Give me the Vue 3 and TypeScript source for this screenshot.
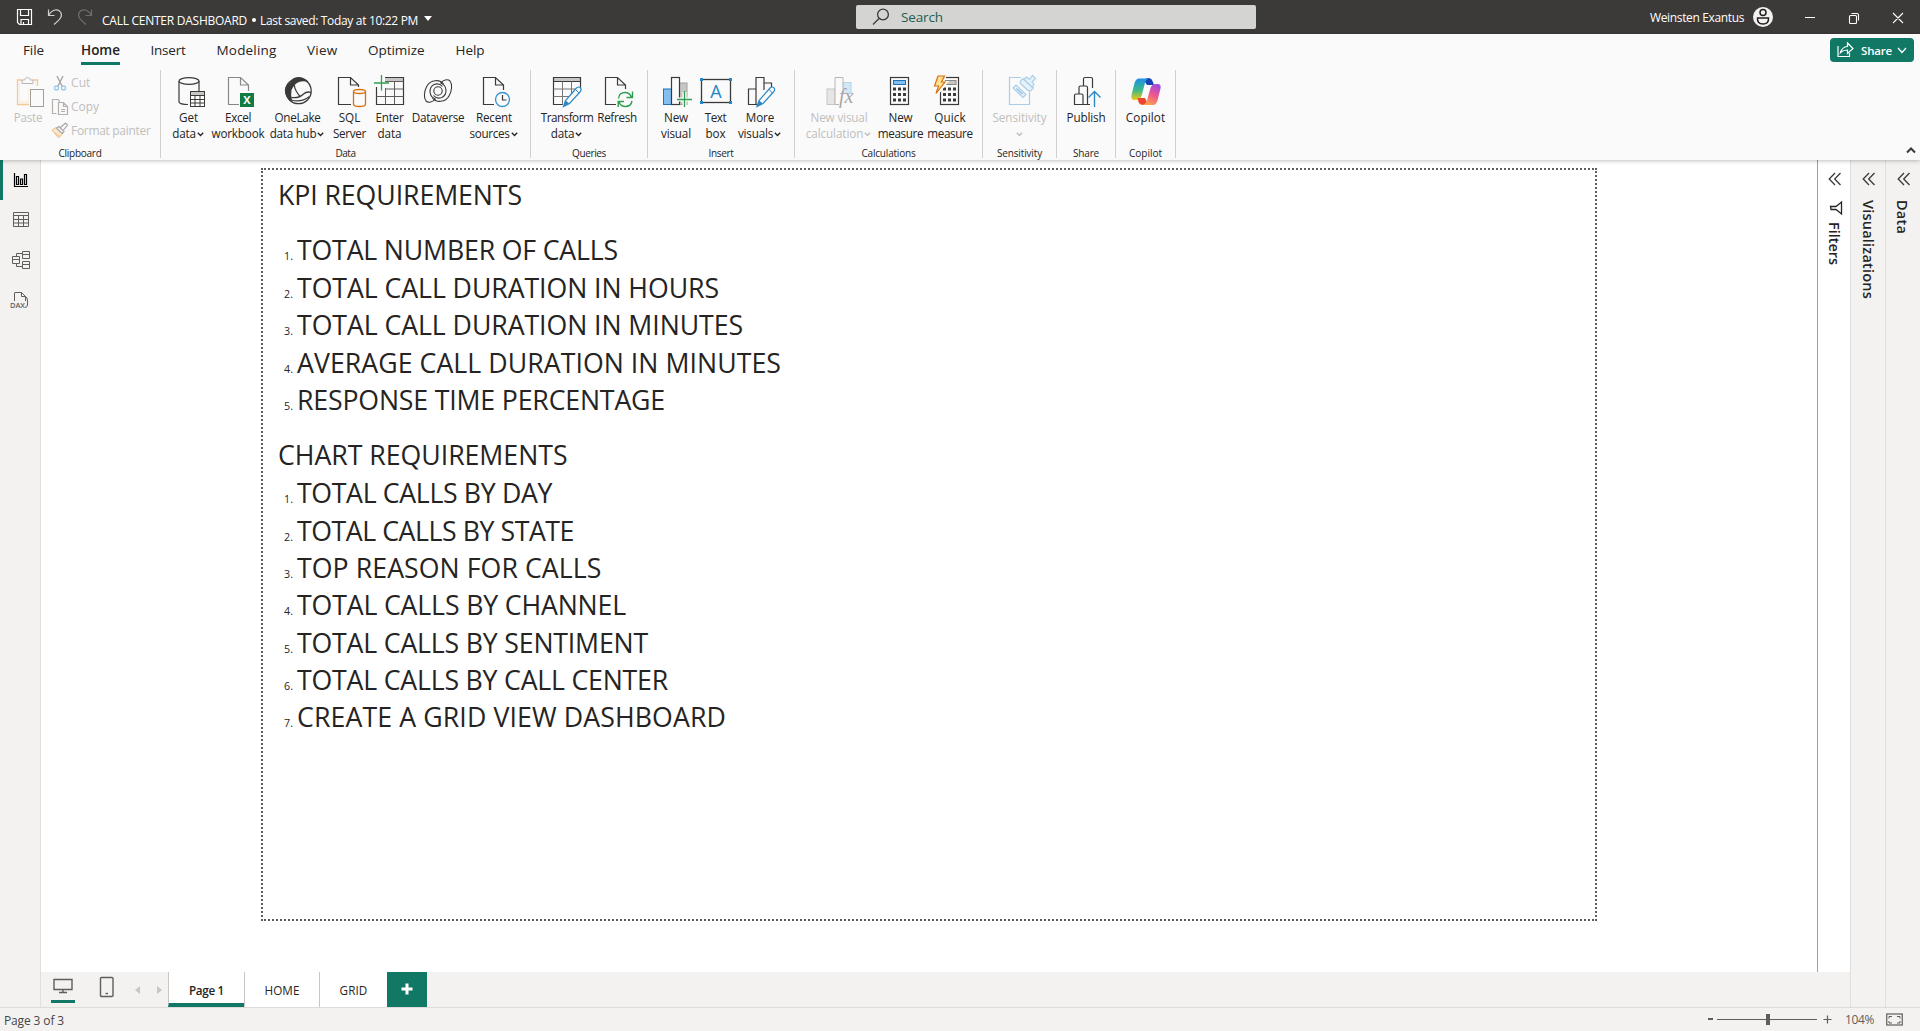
<script setup lang="ts">
import type { Directive } from 'vue'

// Tightens or loosens tracking so a label takes exactly the given length.
const vFit: Directive<HTMLElement, number> = {
  mounted(el, { value }) {
    const box = el.getBoundingClientRect()
    const natural = Math.max(box.width, box.height * (el.classList.contains('vert') ? 1 : 0))
    const count = (el.textContent ?? '').trim().length
    if (value && count > 1) el.style.letterSpacing = `${(value - natural) / count}px`
  },
}

interface Line { text: string; w: number; chevron?: boolean }
interface Tool { icon: string; width: number; lines: Line[]; disabled?: boolean }
interface Group { name: string; nameWidth: number; width: number; pad: number; tools: Tool[] }

const ink = '#3b3a39'
const doc = (x: number, c: string, end: number, foot: number) =>
  `<path d="M${x + 20} ${end}V9L${x + 12} 1.5H${x}V28.5H${foot}M${x + 12} 1.5V9H${x + 20}" fill="none" stroke="${c}" stroke-width="1.2"/>`
const pencil = (x: number) =>
  `<g transform="translate(${x} 10)"><path d="M1 20.500L3 14.500 14 2Q16.500 0 18 2 19.500 3.500 17.500 6L7 17.500Z" fill="#fafafa" stroke="#2b88c8" stroke-width="1.2"/><path d="M1 20.500L3 14.500 7 17.500Z" fill="#2b88c8"/><path d="M13 3.500L16.500 7" stroke="#2b88c8"/></g>`
const pad = (x: number) => {
  let s = `<rect x="${x + 0.5}" y="1.500" width="18" height="27" fill="#fafafa" stroke="#3b3a39" stroke-width="1.200"/>`
  for (const r of [11.5, 17, 22.5]) for (const k of [3, 8, 13]) s += `<rect x="${x + k}" y="${r}" width="3" height="3" fill="#3b3a39"/>`
  return s
}

const icons: Record<string, string> = {
  paste: `<path d="M10 4H5.500V28.500H17M21 4H25.500V10" fill="none" stroke="#f3c892" stroke-width="1.300"/><path d="M7 6H24V10H17V27H7Z" fill="#fbf0dc"/><path d="M8 6H23V12H16V25H8Z" fill="#fafafa"/><path d="M10 7.500V4H12.500Q13 1.500 15.500 1.500T18.500 4H21V7.500Z" fill="#fafafa" stroke="#b8b6b4"/><rect x="18.500" y="13.500" width="13" height="17" fill="#fafafa" stroke="#a19f9d"/>`,
  get: `<path d="M6 5V26Q7 28.500 15 28.500M26 5V15" fill="none" stroke="${ink}" stroke-width="1.200"/><ellipse cx="16" cy="5" rx="10" ry="3.400" fill="#fafafa" stroke="${ink}" stroke-width="1.200"/><rect x="17.500" y="15.500" width="14" height="15" fill="#fff" stroke="${ink}"/><path d="M18 17.500H31" stroke="#c8c6c4" stroke-width="3"/><path d="M17.500 19.500H31.500M17.500 23.500H31.500M17.500 27H31.500M22 19.500V30.500M27 19.500V30.500" stroke="${ink}"/>`,
  excel: `${doc(6.5, '#8a8886', 15, 17)}<rect x="18" y="17" width="14" height="14" fill="#107c41"/><text x="25" y="28" text-anchor="middle" font-family="Open Sans, sans-serif" font-weight="700" font-size="11" fill="#fff">X</text>`,
  onelake: `<circle cx="16.500" cy="15" r="12.700" fill="#fafafa" stroke="${ink}" stroke-width="1.300"/><path d="M8.500 6Q10 1.500 16 1 23 1 27 6.500 22 4.500 17 6 12 8 9.500 14 8.500 19 10 24.500L7.500 24.500Q1 17 3.500 11 5.500 8 8.500 6Z" fill="${ink}"/><path d="M12 8.500Q13 15 18.500 21M9.500 21.500Q17 22.500 21.500 18 25 15 29 16.500M9 24Q19 27 27.500 20.500" fill="none" stroke="${ink}" stroke-width="1.300"/>`,
  sql: `${doc(4.5, ink, 11, 17)}<path d="M19.500 15.500V28.500Q20 30.500 25.500 30.500T31.500 28.500V15.500" fill="#fafafa" stroke="#d8700f" stroke-width="1.300"/><ellipse cx="25.500" cy="15.500" rx="6" ry="2" fill="#fafafa" stroke="#d8700f" stroke-width="1.300"/>`,
  enter: `<rect x="11" y="2" width="18" height="4" fill="#c8c6c4"/><path d="M11 1.500H29.500V28.500H2.500V11" fill="none" stroke="${ink}" stroke-width="1.200"/><path d="M11 5.500H29.500M11 13H29.500M2.500 20.500H29.500M11.500 12V28.500M20.500 5.500V28.500" fill="none" stroke="#605e5c"/><path d="M7.500 -1V14.500M0 7H15" stroke="#2f9e4f" stroke-width="1.300"/>`,
  dataverse: `<g fill="none" stroke="${ink}" stroke-width="1.100"><path d="M21.500 8C18 3 8.500 3.500 5 10 2 15 1.500 22 4 25 6.500 27.500 11 26 13.500 23"/><path d="M21.500 8C18 3 8.500 3.500 5 10 2 15 1.500 22 4 25 6.500 27.500 11 26 13.500 23" transform="rotate(180 16 15)"/><path d="M13.500 23A8 8 0 0 1 12 8.500Q17 6.500 20.500 10.500M18.500 7A8 8 0 0 1 20 21.500Q15 23.500 11.500 19.500"/><circle cx="16" cy="15" r="4.200"/></g>`,
  recent: `${doc(5.5, ink, 14, 16)}<circle cx="24.500" cy="23.500" r="7" fill="#fafafa" stroke="#3a96d0" stroke-width="1.400"/><path d="M24.500 19V24H28.500" fill="none" stroke="${ink}" stroke-width="1.200"/>`,
  transform: `<rect x="2" y="2" width="27" height="4" fill="#c8c6c4"/><path d="M29.500 12V1.500H2.500V28.500H12M2.500 5.500H29.500" fill="none" stroke="${ink}" stroke-width="1.200"/><path d="M2.500 13H27M2.500 20.500H18M11.500 5.500V28.500M20.500 5.500V19" stroke="#797775"/>${pencil(11.5)}`,
  refresh: `${doc(4.5, ink, 13, 15)}<path d="M17.500 22.500Q18 16.500 24 16.500 29 16.500 30.500 21.500M31.500 15.500V21.500H25.500M31 25Q30 30.500 24.500 30.500 19.500 30.500 18 26M17.200 31V25.500H23" fill="none" stroke="#2f9e4f" stroke-width="1.400"/>`,
  newvisual: `<rect x="19.500" y="7" width="7.500" height="21.500" fill="#c8c6c4" stroke="#a19f9d"/><rect x="3.500" y="13" width="8" height="15.500" fill="#83bff1" stroke="#2273b5"/><rect x="11.500" y="1.500" width="8" height="27" fill="#fafafa" stroke="${ink}" stroke-width="1.200"/><path d="M24.500 16V31M17 23.500H32" stroke="#fafafa" stroke-width="4"/><path d="M24.500 15V31M17 23.500H32" stroke="#2f9e4f" stroke-width="1.300"/>`,
  textbox: `<rect x="1.500" y="3.500" width="29" height="23" fill="none" stroke="${ink}" stroke-width="1.300"/><path d="M0 2h3v3H0zM29 2h3v3H29zM0 25h3v3H0zM29 25h3v3H29z" fill="#2088c9"/><text x="16" y="22" text-anchor="middle" font-family="Open Sans, sans-serif" font-size="18" fill="#2088c9">A</text>`,
  morevisuals: `<path d="M4.500 28.500V13H12V28.500ZM12 28.500V1.500H20V14M20 7H27.500V12M12 28.500H14" fill="none" stroke="${ink}" stroke-width="1.200"/>${pencil(12)}`,
  calc: `<rect x="20" y="6.500" width="8" height="11" fill="#d3e7f5" stroke="#b3d4ea"/><rect x="4" y="13" width="8" height="15.500" fill="#e8e6e4" stroke="#c8c6c4"/><path d="M16 28.500H12V1.500H20V13" fill="#fafafa" stroke="#b8b6b4"/><text x="16" y="27" font-family="Liberation Serif, serif" font-style="italic" font-size="20" fill="#a8a6a4">fx</text>`,
  newmeasure: `${pad(5)}<rect x="8.500" y="4.500" width="12" height="4" fill="#83bff1" stroke="#2273b5"/>`,
  quickmeasure: `${pad(6)}<rect x="11" y="4.500" width="11" height="4" fill="#c8c6c4" stroke="#8a8886"/><path d="M4 0H11L8 6.500H12L3 18 5 10H1Z" fill="#ffdf93" stroke="#fafafa" stroke-width="3"/><path d="M4 0H10.500L7.500 6H11L2 17.500 4.500 10H0.500Z" fill="#ffdf93" stroke="#d8700f" stroke-width="1.200"/>`,
  sensitivity: `<path d="M17 1.500H5.500V28.500H25.500V15" fill="none" stroke="#a9cfe8" stroke-width="1.200"/><g fill="#e6f1f9" stroke="#a9cfe8" stroke-width="1.200"><path d="M9 12L12 9 22 18.500 19 21.500Z"/><path d="M12.500 12.500L18.500 18" stroke="#8fc0df"/><path d="M16.500 5L19 2.500 29.500 12 27 14.500Q25 15.500 23.500 14L17 8Q15.500 6.500 16.500 5Z"/><path d="M20 3.500L22.500 1 25.500 3.500 28.500 -0.500 31.500 2.500 28 6 30 8.500 28 11Z"/></g>`,
  publish: `<g fill="#fafafa" stroke="${ink}" stroke-width="1.200"><path d="M13.500 10V3Q13.500 1.500 15 1.500H21Q22.500 1.500 22.500 3V12"/><path d="M9 18V11.500Q9 10 10.500 10H16Q17.500 10 17.500 11.500V28.500"/><path d="M4.500 28.500V19.500Q4.500 18 6 18H11.500Q13 18 13 19.500V28.500ZM13 28.500H20"/></g><path d="M24.500 31V16M18.500 21.500L24.500 15.500 30.500 21.500" fill="none" stroke="#2b88c8" stroke-width="1.400"/>`,
  copilot: `<defs><linearGradient id="cA" x1="0" y1="0" x2="0" y2="1"><stop offset="0" stop-color="#1f8fe8"/><stop offset=".55" stop-color="#3dbb86"/><stop offset="1" stop-color="#f4c814"/></linearGradient><linearGradient id="cB" x1="0.700" y1="0" x2="0.300" y2="1"><stop offset="0" stop-color="#a24be0"/><stop offset=".5" stop-color="#f0578c"/><stop offset="1" stop-color="#fba64b"/></linearGradient></defs><path d="M14 4.500Q15 2 18 2 21.500 2 22.500 5L24 9H17Z" fill="#1742b8"/><path d="M9 2.500H19Q16 3 15 7L11.500 20Q10 24 6 24H4.500Q0.500 24 1.500 19L4.500 7Q6 2.500 9 2.500Z" fill="url(#cA)"/><path d="M7.500 22H15L17 26Q15 29 13.500 29 9.500 29 8.500 26Z" fill="#ee4432"/><path d="M23 29H13Q16 28 17 24.500L20.500 12Q22 8 26 8H27.500Q31.500 8 30.500 12.500L27.500 24.500Q26 29 23 29Z" fill="url(#cB)"/>`,
}

const L = (text: string, w: number, chevron = false): Line => ({ text, w, chevron })
const groups: Group[] = [
  { name: 'Data', nameWidth: 20, width: 370, pad: 7, tools: [
    { icon: 'get', width: 41, lines: [L('Get', 19), L('data', 23.5, true)] },
    { icon: 'excel', width: 58, lines: [L('Excel', 26), L('workbook', 53)] },
    { icon: 'onelake', width: 61, lines: [L('OneLake', 46), L('data hub', 46.5, true)] },
    { icon: 'sql', width: 43, lines: [L('SQL', 21.5), L('Server', 33)] },
    { icon: 'enter', width: 37, lines: [L('Enter', 28), L('data', 24)] },
    { icon: 'dataverse', width: 60, lines: [L('Dataverse', 52.5)] },
    { icon: 'recent', width: 52, lines: [L('Recent', 36), L('sources', 40, true)] },
  ] },
  { name: 'Queries', nameWidth: 34, width: 117, pad: 5, tools: [
    { icon: 'transform', width: 62, lines: [L('Transform', 52.5), L('data', 23.5, true)] },
    { icon: 'refresh', width: 38, lines: [L('Refresh', 39.5)] },
  ] },
  { name: 'Insert', nameWidth: 25, width: 147, pad: 7, tools: [
    { icon: 'newvisual', width: 42, lines: [L('New', 24), L('visual', 30)] },
    { icon: 'textbox', width: 37, lines: [L('Text', 21.5), L('box', 20)] },
    { icon: 'morevisuals', width: 52, lines: [L('More', 28.5), L('visuals', 35, true)] },
  ] },
  { name: 'Calculations', nameWidth: 54, width: 188, pad: 7, tools: [
    { icon: 'calc', width: 74, disabled: true, lines: [L('New visual', 57), L('calculation', 57.5, true)] },
    { icon: 'newmeasure', width: 49, lines: [L('New', 24), L('measure', 45.5)] },
    { icon: 'quickmeasure', width: 50, lines: [L('Quick', 31.5), L('measure', 45.5)] },
  ] },
  { name: 'Sensitivity', nameWidth: 45, width: 74, pad: 5, tools: [
    { icon: 'sensitivity', width: 63, disabled: true, lines: [L('Sensitivity', 54), L('', 0, true)] },
  ] },
  { name: 'Share', nameWidth: 26, width: 59, pad: 4, tools: [
    { icon: 'publish', width: 50, lines: [L('Publish', 39)] },
  ] },
  { name: 'Copilot', nameWidth: 33, width: 60, pad: 5, tools: [
    { icon: 'copilot', width: 49, lines: [L('Copilot', 39.5)] },
  ] },
]

const menus = [
  { text: 'File', w: 21, gap: 37 }, { text: 'Home', w: 39, gap: 30.5 }, { text: 'Insert', w: 35, gap: 31 },
  { text: 'Modeling', w: 60, gap: 30.5 }, { text: 'View', w: 30.5, gap: 30.5 }, { text: 'Optimize', w: 56.5, gap: 31 },
  { text: 'Help', w: 29, gap: 0 },
]

const kpis = [L('TOTAL NUMBER OF CALLS', 321), L('TOTAL CALL DURATION IN HOURS', 422), L('TOTAL CALL DURATION IN MINUTES', 446), L('AVERAGE CALL DURATION IN MINUTES', 484), L('RESPONSE TIME PERCENTAGE', 368)]
const charts = [L('TOTAL CALLS BY DAY', 255), L('TOTAL CALLS BY STATE', 277), L('TOP REASON FOR CALLS', 304.5), L('TOTAL CALLS BY CHANNEL', 329), L('TOTAL CALLS BY SENTIMENT', 351), L('TOTAL CALLS BY CALL CENTER', 371), L('CREATE A GRID VIEW DASHBOARD', 429)]
</script>

<template>
  <div class="app">
    <header class="titlebar">
      <svg class="quick" width="80" height="20" viewBox="0 0 80 20" fill="none" stroke="#fff" stroke-width="1.200">
        <path d="M1.500 2.500H15.500V17.500H3.500L1.500 15.500ZM4.500 2.500V8.500H12.500V2.500M5 17.500V12.500H12.500V17.500M7.500 15V17.500" />
        <path d="M32.500 2.500V8.500H38.500M32.500 8.500C36 2 42 1.500 44.500 5 47 9 44.500 12 38 17.500" stroke="#d0cfce" />
        <path d="M75.500 2.500V8.500H69.500M75.500 8.500C72 2 66 1.500 63.500 5 61 9 63.500 12 70 17.500" stroke="#6f6e6c" />
      </svg>
      <span class="file-name"><span v-fit="145">CALL CENTER DASHBOARD</span></span>
      <i class="dot"></i>
      <span class="saved"><span v-fit="158">Last saved: Today at 10:22 PM</span></span>
      <i class="drop"></i>
      <div class="search">
        <svg width="18" height="18" viewBox="0 0 18 18" fill="none" stroke="#3b3a39" stroke-width="1.300"><circle cx="11" cy="6.500" r="5.400" /><path d="M7 10.500L1 16.500" /></svg>
        <span v-fit="42">Search</span>
      </div>
      <span class="user"><span v-fit="94">Weinsten Exantus</span></span>
      <svg class="avatar" width="20" height="20" viewBox="0 0 20 20"><circle cx="10" cy="10" r="10" fill="#f3f2f1" /><g fill="none" stroke="#201f1e" stroke-width="1.500"><circle cx="10" cy="5.500" r="3" /><path d="M4.500 11H15.500Q16 17 10 17T4.500 11Z" /></g></svg>
      <svg class="window" width="100" height="14" viewBox="0 0 100 14" fill="none" stroke="#fff" stroke-width="1.100"><path d="M1 6.500H11M89 2L99 12M99 2L89 12M47.500 2.500H53Q54.500 2.500 54.500 4V9.500" /><rect x="45.500" y="4.500" width="7" height="8" rx="1" /></svg>
    </header>

    <section class="ribbon">
      <div class="menubar">
        <nav>
          <span v-for="m in menus" :key="m.text" class="menu" :class="{ active: m.text === 'Home' }" :style="{ width: m.w + 'px', marginRight: m.gap + 'px' }"><span v-fit="m.w">{{ m.text }}</span></span>
        </nav>
        <button class="share">
          <svg width="17" height="16" viewBox="0 0 17 16" fill="none" stroke="#fff" stroke-width="1.200"><path d="M1 4V14.500H12.500V11M3.500 10.500Q5 5 10.500 4.500V1L16 6.500 10.500 11.500V8Q6 8 3.500 10.500Z" /></svg>
          <span v-fit="31">Share</span>
          <svg class="share-chev" width="10" height="7" viewBox="0 0 10 7" fill="none" stroke="#fff" stroke-width="1.300"><path d="M1 1L5 5.500 9 1" /></svg>
        </button>
      </div>

      <div class="tools">
        <div class="group clipboard">
          <div class="row">
            <div class="tool disabled paste">
              <svg width="32" height="32" viewBox="0 0 32 32" v-html="icons.paste"></svg>
              <div class="line"><span v-fit="28.500">Paste</span></div>
            </div>
            <div class="small">
              <div>
                <svg width="18" height="18" viewBox="0 0 18 18" fill="none"><path d="M6 2L11.500 13M12 2L6.500 13" stroke="#a8a6a4" stroke-width="1.400" /><circle cx="5.500" cy="14" r="2" stroke="#9cc9e4" stroke-width="1.400" /><circle cx="12.500" cy="14" r="2" stroke="#9cc9e4" stroke-width="1.400" /></svg>
                <span v-fit="19.500">Cut</span>
              </div>
              <div>
                <svg width="18" height="18" viewBox="0 0 18 18" fill="none" stroke="#b3b0ad" stroke-width="1.200"><path d="M5.500 15.500H1.500V1.500H7L9 3.500M7.500 4.500H12.500L16.500 8.500V16.500H7.500ZM12.500 4.500V8.500H16.500M10 11.500H14M10 13.500H14" /></svg>
                <span v-fit="28">Copy</span>
              </div>
              <div>
                <svg width="18" height="18" viewBox="0 0 18 18"><path d="M1 8L5 5.500 12 11.500 7.500 16Z" fill="#fbe6cc" stroke="#efc08c" /><path d="M3 10.500L9 14.500" stroke="#efc08c" /><path d="M5.500 6L8 4.500 13 9.500 11 11.500ZM9.500 5.500L14.500 1 16.500 3 12.500 8" fill="#fafafa" stroke="#a8a6a4" stroke-width="1.200" /></svg>
                <span v-fit="79.500">Format painter</span>
              </div>
            </div>
          </div>
          <div class="caption"><span v-fit="43">Clipboard</span></div>
        </div>

        <div v-for="g in groups" :key="g.name" class="group" :style="{ width: g.width + 'px' }">
          <div class="row" :style="{ paddingLeft: g.pad + 'px' }">
            <div v-for="t in g.tools" :key="t.icon" class="tool" :class="{ disabled: t.disabled }" :style="{ width: t.width + 'px' }">
              <svg width="32" height="32" viewBox="0 0 32 32" v-html="icons[t.icon]"></svg>
              <div v-for="l in t.lines" :key="l.text" class="line">
                <span v-if="l.text" v-fit="l.w">{{ l.text }}</span>
                <svg v-if="l.chevron" class="chev" :class="{ solo: !l.text }" width="7" height="5" viewBox="0 0 7 5" fill="none" stroke="currentColor" stroke-width="1.300"><path d="M0.800 0.800L3.500 3.500 6.200 0.800" /></svg>
              </div>
            </div>
          </div>
          <div class="caption"><span v-fit="g.nameWidth">{{ g.name }}</span></div>
        </div>
        <svg class="collapse" width="10" height="7" viewBox="0 0 10 7" fill="none" stroke="#3b3a39" stroke-width="2"><path d="M1 5.500L5 1.500 9 5.500" /></svg>
      </div>
    </section>

    <main>
      <aside class="views">
        <div class="view on"><svg width="18" height="18" viewBox="0 0 18 18" fill="none" stroke="#000" stroke-width="1.200"><path d="M2.500 2V15.500H16M4.500 13.500V5.500H6.500V13.500ZM8.500 13.500V8H10.500V13.500ZM12.500 13.500V3.500H14.500V13.500Z" /></svg></div>
        <div class="view"><svg width="18" height="18" viewBox="0 0 18 18" fill="none" stroke="#605e5c"><path d="M1.500 1.500H16.500V15.500H1.500ZM1.500 4.500H16.500M1.500 8.500H16.500M1.500 12H16.500M6.500 4.500V15.500M11.500 4.500V15.500" /></svg></div>
        <div class="view"><svg width="20" height="20" viewBox="0 0 20 20" fill="none" stroke="#605e5c"><path d="M1.500 6.500H8.500V13.500H1.500ZM1.500 9.500H8.500M11.500 1.500H18.500V8.500H11.500ZM11.500 4.500H18.500M11.500 11.500H18.500V18.500H11.500ZM11.500 14.500H18.500M5.500 6.500V3.500H11.500M5.500 13.500V16.500H11.500" /></svg></div>
        <div class="view dax"><svg width="20" height="20" viewBox="0 0 20 20" fill="none" stroke="#605e5c"><path d="M4.500 10V2Q4.500 1.500 5 1.500H11.500L15.500 5.500V10M11.500 1.500V5.500H15.500M15.500 5.500Q17.500 6 17.500 10V14Q17.500 16 15 16.500" /><text x="0" y="17" font-family="Open Sans, sans-serif" font-size="7.500" font-weight="600" stroke="none" fill="#605e5c" textLength="15">DAX</text></svg></div>
      </aside>

      <section class="center">
        <div class="stage">
          <div class="canvas">
            <article>
              <h2><span v-fit="244">KPI REQUIREMENTS</span></h2>
              <ol class="first"><li v-for="(k, i) in kpis" :key="k.text"><small>{{ i + 1 }}.</small><span v-fit="k.w">{{ k.text }}</span></li></ol>
              <h2 class="second"><span v-fit="289.500">CHART REQUIREMENTS</span></h2>
              <ol class="last"><li v-for="(k, i) in charts" :key="k.text"><small>{{ i + 1 }}.</small><span v-fit="k.w">{{ k.text }}</span></li></ol>
            </article>
          </div>
          <aside class="filters">
            <svg class="dbl" width="14" height="14" viewBox="0 0 14 14"><path d="M7 1L1.200 7 7 13M12.500 1L6.700 7 12.500 13" /></svg>
            <svg class="funnel" width="14" height="14" viewBox="0 0 14 14" fill="none" stroke="#252423" stroke-width="1.300"><path d="M12.500 1V13L7 8.500H2L1.500 5.500H7Z" /></svg>
            <span v-fit="43" class="vert">Filters</span>
          </aside>
        </div>
        <footer class="pages">
          <div class="device on"><svg width="22" height="18" viewBox="0 0 22 18" fill="none" stroke="#605e5c" stroke-width="1.400"><path d="M2 2.500H20V12.500H2ZM11 12.500V15.500M7 15.500H15" /></svg></div>
          <div class="device phone"><svg width="16" height="22" viewBox="0 0 16 22" fill="none" stroke="#605e5c" stroke-width="1.400"><rect x="1.500" y="1.500" width="12.500" height="19" rx="1" /><path d="M6.500 17.500H9" /></svg></div>
          <i class="tri left"></i><i class="tri right"></i>
          <div class="page current"><span v-fit="35">Page 1</span></div>
          <div class="page home"><span v-fit="35">HOME</span></div>
          <div class="page grid"><span v-fit="28">GRID</span></div>
          <div class="add"><svg width="12" height="12" viewBox="0 0 12 12" stroke="#fff" stroke-width="3"><path d="M6 0.500V11.500M0.500 6H11.500" /></svg></div>
        </footer>
      </section>

      <aside class="pane viz">
        <svg class="dbl" width="14" height="14" viewBox="0 0 14 14"><path d="M7 1L1.200 7 7 13M12.500 1L6.700 7 12.500 13" /></svg>
        <span v-fit="99" class="vert">Visualizations</span>
      </aside>
      <aside class="pane data">
        <svg class="dbl" width="14" height="14" viewBox="0 0 14 14"><path d="M7 1L1.200 7 7 13M12.500 1L6.700 7 12.500 13" /></svg>
        <span v-fit="34" class="vert">Data</span>
      </aside>
    </main>

    <footer class="status">
      <span v-fit="60">Page 3 of 3</span>
      <div class="zoom">
        <i class="minus"></i>
        <div class="track"><i></i></div>
        <svg width="9" height="9" viewBox="0 0 9 9" stroke="#605e5c" stroke-width="1.200"><path d="M4.500 0.500V8.500M0.500 4.500H8.500" /></svg>
        <span class="pct"><span v-fit="29">104%</span></span>
        <svg width="17" height="13" viewBox="0 0 17 13" fill="none" stroke="#605e5c"><rect x="0.750" y="1" width="15.500" height="11" stroke-width="1.200" /><path d="M3 5.500V3.500H6M11 3.500H14V5.500M14 8V10H11M6 10H3V8" /></svg>
      </div>
    </footer>
  </div>
</template>

<style>
body { overflow: hidden; }
</style>

<style scoped>
.app { width: 1920px; height: 1031px; display: flex; flex-direction: column; font-family: "Open Sans", "Noto Sans", sans-serif; font-size: 12px; color: #252423; background: #f3f2f1; white-space: nowrap; overflow: hidden; }
.app span { display: inline-block; }
i { display: block; flex: none; }
svg { display: block; flex: none; overflow: visible; }
.titlebar { height: 34px; background: #3b3a39; color: #fff; display: flex; align-items: center; box-sizing: border-box; padding-left: 16px; flex: none; }
.quick { margin-right: 6px; }
.file-name { width: 150px; padding-top: 7px; }
.dot { width: 4px; height: 4px; border-radius: 2px; background: #fff; margin-top: 5px; }
.saved { width: 164px; margin-left: 4px; padding-top: 7px; }
.drop { border: 4.5px solid transparent; border-top: 5px solid #fff; border-bottom: 0; margin-top: 2px; }
.search { width: 400px; height: 24px; margin-left: 424px; background: #d4d4d2; border-radius: 2px; display: flex; align-items: center; box-sizing: border-box; padding-left: 16px; gap: 11px; color: #1b5e50; font-size: 13.500px; flex: none; }
.user { margin-left: 394px; width: 103px; padding-top: 1px; }
.avatar { margin-right: 31px; }
.window { margin-top: 1px; }
.ribbon { height: 126px; flex: none; background: #fafafa; position: relative; z-index: 2; box-shadow: 0 1px 4px rgba(0, 0, 0, 0.25); }
.menubar { height: 36px; display: flex; justify-content: space-between; padding: 0 6px 0 23px; }
nav { display: flex; }
.menu { height: 31px; line-height: 32px; font-size: 13.500px; box-sizing: border-box; flex: none; }
.menu.active { font-weight: 600; border-bottom: 3px solid #117865; }
.share { margin-top: 4px; height: 24px; width: 84px; padding: 0 0 0 7px; border: 0; border-radius: 4px; background: #117865; color: #fff; display: flex; align-items: center; font: 600 11.500px "Open Sans", sans-serif; }
.share svg { margin-right: 7px; }
.share .share-chev { margin: 0 0 0 5px; }
.tools { display: flex; height: 88px; position: relative; }
.group { border-right: 1px solid #d2d0ce; box-sizing: border-box; flex: none; height: 88px; }
.clipboard { width: 161px; }
.row { display: flex; height: 74px; }
.tool { flex: none; padding-top: 6px; display: flex; flex-direction: column; align-items: center; font-size: 11.700px; }
.tool > svg { margin-bottom: 1px; }
.tool.disabled, .small { color: #c0bebc; }
.line { height: 16px; line-height: 17px; display: flex; align-items: center; justify-content: center; }
.line + .line { line-height: 16px; }
.chev { margin-left: 1px; margin-right: 1px; margin-top: 2px; }
.chev.solo { margin: 2px 0 0; }
.paste { width: 34px; padding-left: 11px; }
.small { padding-left: 6px; padding-top: 1px; font-size: 12px; }
.small div { height: 24px; display: flex; align-items: center; gap: 3px; }
.small span { margin-top: -1px; margin-left: -1px; }
.caption { height: 14px; line-height: 19px; text-align: center; font-size: 10px; }
.collapse { position: absolute; right: 4px; bottom: 4px; }
main { flex: 1; display: flex; min-height: 0; }
.views { width: 41px; box-sizing: border-box; border-right: 1px solid #e1dfdd; flex: none; }
.view { height: 40px; display: flex; align-items: center; justify-content: center; padding-left: 2px; }
.view.on { border-left: 3px solid #117865; padding: 0 2px 0 0; }
.dax { padding: 1px 1px 0 0; }
.center { flex: 1; display: flex; flex-direction: column; min-width: 0; }
.stage { flex: 1; display: flex; background: #fff; }
.canvas { flex: 1; padding: 8px 0 0 220px; }
article { width: 1336px; height: 753px; box-sizing: border-box; border: 2px dotted #605e5c; padding: 6.200px 0 0 15px; font-size: 26.700px; line-height: 37.400px; }
h2 { margin: 0; font-size: inherit; font-weight: 400; height: 37.400px; }
ol { list-style: none; margin: 0; padding: 0 0 0 1px; }
ol.first { margin-top: 17.800px; }
ol.last { margin-top: 0.500px; }
.second { margin-top: 17.900px; }
li { display: flex; align-items: baseline; height: 37.400px; }
small { width: 14px; text-align: right; font-size: 10.700px; margin-right: 4px; flex: none; }
.filters { width: 33px; border-left: 1px solid #a19f9d; flex: none; padding: 12px 0 0 10px; box-sizing: border-box; }
.dbl { fill: none; stroke: #3b3a39; stroke-width: 1.300; }
.funnel { margin: 15px 0 7px 1px; }
.vert { writing-mode: vertical-rl; font-size: 14.500px; line-height: 20px; font-weight: 600; }
.filters .vert { margin-left: -4px; display: block; }
.pane { border-left: 1px solid #e1dfdd; box-sizing: border-box; flex: none; padding: 12px 0 0 11px; }
.pane .vert { margin: 14px 0 0 -4px; display: block; }
.viz { width: 35px; }
.data { width: 35px; }
.data .vert { margin-left: -5px; }
.pages { height: 35px; flex: none; display: flex; padding-left: 10px; }
.device { width: 24px; height: 31px; display: flex; justify-content: center; padding-top: 5px; box-sizing: border-box; }
.device.on { border-bottom: 3px solid #117865; }
.device.on svg { margin-left: -1px; }
.phone { margin-left: 20px; padding-top: 4px; }
.tri { border: 4px solid transparent; margin-top: 14px; align-self: flex-start; }
.tri.left { border-right: 5px solid #c8c6c4; border-left: 0; margin-left: 16px; }
.tri.right { border-left: 5px solid #c8c6c4; border-right: 0; margin-left: 17px; }
.page { background: #fff; height: 35px; box-sizing: border-box; border-left: 1px solid #c8c6c4; display: flex; justify-content: center; padding-top: 9px; line-height: 18px; font-size: 11.700px; }
.page.current { width: 76px; margin-left: 6px; border-bottom: 4px solid #117865; font-weight: 600; }
.home { width: 75px; }
.grid { width: 68px; }
.add { width: 40px; background: #117865; display: flex; justify-content: center; padding-top: 11px; box-sizing: border-box; }
.status { height: 24px; flex: none; border-top: 1px solid #dedcda; box-sizing: border-box; display: flex; justify-content: space-between; align-items: center; padding: 2px 17px 0 4px; color: #484644; }
.zoom { display: flex; align-items: center; margin-top: -3px; color: #605e5c; }
.minus { width: 5px; height: 2px; background: #605e5c; margin-right: 4px; }
.track { width: 100px; height: 11px; display: flex; align-items: center; justify-content: center; background: linear-gradient(#605e5c, #605e5c) center / 100% 1px no-repeat; margin-right: 6px; }
.track i { width: 4px; height: 11px; background: #605e5c; margin-left: 2px; }
.pct { width: 41px; margin-left: 13px; }
</style>
